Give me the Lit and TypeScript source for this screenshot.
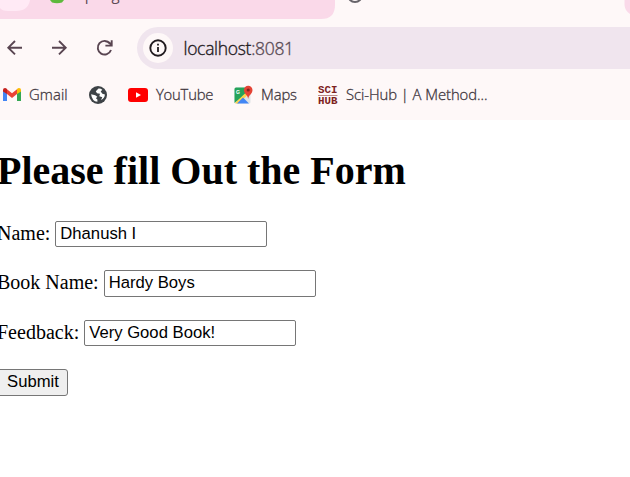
import { LitElement, html, css } from "lit";
import { customElement } from "lit/decorators.js";

const chromeFont = css`"Open Sans", "Noto Sans", sans-serif`;

@customElement("browser-chrome")
class BrowserChrome extends LitElement {
  static styles = css`
    :host { display: block; height: 120px; background: #fef8f8; overflow: hidden; font-family: ${chromeFont}; }
    svg { display: block; flex: none; }
    .strip { height: 19px; overflow: hidden; }
    .toolbar { height: 60px; display: flex; align-items: center; }
    .nav { width: 137px; height: 42px; margin-top: -2px; }
    .address { flex: 1; height: 42px; background: #f0e5ee; border-radius: 21px 0 0 21px; display: flex; align-items: center; padding-left: 6px; margin-top: -2px; }
    .info { width: 30px; height: 30px; border-radius: 50%; background: #fef8f8; display: flex; align-items: center; justify-content: center; }
    .url { margin-left: 10.5px; font-size: 17.5px; font-weight: 300; -webkit-text-stroke: 0.35px; line-height: 24px; letter-spacing: -0.3px; color: #1f1a1e; white-space: nowrap; }
    .port { color: #5b4d57; }
    .bookmarks { display: grid; grid-template-columns: 29px 59px 40px 28px 78px 27px 57px 28px auto; height: 32px; align-items: center; color: #40363d; font-size: 14.8px; line-height: 20px; white-space: nowrap; justify-content: start; }
    .bookmarks span { font-weight: 300; -webkit-text-stroke: 0.3px; margin-top: -3px; }
    .gmail { letter-spacing: 0.1px; }
    .tube { letter-spacing: -0.2px; }
    .maps { letter-spacing: -0.1px; }
    .sci { letter-spacing: -0.05px; }
    .title { font-size: 15px; letter-spacing: -0.4px; fill: #5d4b56; font-family: ${chromeFont}; }
    .logo { font: bold 10.8px "Liberation Mono", monospace; fill: #7d2220; }
    .g { font: bold 5px "Liberation Sans", sans-serif; fill: #fff; }
  `;
  render() {
    return html`
      <div class="strip">
        <svg width="630" height="19" viewBox="0 0 630 19">
          <path d="M0 0H335V5Q335 19 321 19H0Z" fill="#fad9e9" />
          <path d="M0 0H30Q28 11 16 11H8Q2 11 0 8Z" fill="#ffeaf5" />
          <path d="M50 0H64L62 2.5Q57 4 52 2.5Z" fill="#5db93c" />
          <text x="77" y="-0.5" class="title">Spring</text>
          <circle cx="355" cy="-5" r="7" fill="none" stroke="#67646a" stroke-width="2" />
          <path d="M630 0H624.5V5Q625 11 630 14Z" fill="#fad9e9" />
        </svg>
      </div>
      <div class="toolbar">
        <svg class="nav" viewBox="0 27 137 42" fill="none" stroke="#594551" stroke-width="1.9">
          <path d="M22 47.7H8.5M15 41L8.3 47.7L15 54.4" />
          <path d="M52 47.7H65.5M59 41L65.7 47.7L59 54.4" />
          <path d="M110 43.6A6.8 6.8 0 1 0 111 50M111.7 40.3V45.6H105.4M111.7 45L108.8 42.2" />
        </svg>
        <div class="address">
          <div class="info">
            <svg width="18" height="18" viewBox="0 0 18 18">
              <circle cx="9" cy="9" r="7.7" fill="none" stroke="#211b1f" stroke-width="1.9" />
              <path d="M8.1 8H9.9V13H8.1ZM8.1 4.8H9.9V6.6H8.1Z" fill="#211b1f" />
            </svg>
          </div>
          <div class="url">localhost<span class="port">:8081</span></div>
        </div>
      </div>
      <div class="bookmarks">
        <svg width="24" height="20" viewBox="0 85 24 20">
          <path d="M3 90V101H7V93Z" fill="#4285f4" />
          <path d="M17 93V101H21V90Z" fill="#34a853" />
          <path d="M7 89.3L12 93.2L17 89.3V94L12 98L7 94Z" fill="#ea4335" />
          <path d="M3 90Q3 88 5 88Q6 88 7 89V94L3 91.5Z" fill="#c5221f" />
          <path d="M21 90Q21 88 19 88Q18 88 17 89V94L21 91.5Z" fill="#fbbc04" />
        </svg>
        <span class="gmail">Gmail</span>
        <svg width="20" height="20" viewBox="0 0 20 20">
          <circle cx="10" cy="10" r="9" fill="#3e4347" />
          <path d="M10.5 3.5L7.8 6.2L9 8.2L12 8.8L11.3 11.2L14.3 12.3L13 15Q16.8 13.2 16.9 9.6L14.4 8.7L12.7 6.5L14.3 4.7Q12.5 3.2 10.5 3.5ZM3.1 9.3L7.2 10.2L9.3 11.8L7.9 13.2L9.4 14.6V16.8Q4 16.4 3.1 9.3Z" fill="#fff" />
        </svg>
        <svg width="20" height="14" viewBox="0 0 20 14">
          <rect width="20" height="14" rx="3" fill="#f00" />
          <path d="M8 4.2L13 7L8 9.8Z" fill="#fff" />
        </svg>
        <span class="tube">YouTube</span>
        <svg width="20" height="20" viewBox="0 0 20 20">
          <rect x="0.5" y="2.5" width="16" height="16" rx="1.5" fill="#dfe3e6" />
          <path d="M0.5 4Q0.5 2.5 2 2.5H12V9L0.5 18Z" fill="#25a35a" />
          <path d="M1 18L12 7.5L14 9.5L5 18.5H2Z" fill="#ffd34d" />
          <path d="M9 12.5L15 18.5H3Z" fill="#4286f5" />
          <text x="2" y="8.5" class="g">G</text>
          <path d="M14.2 0.8A4.3 4.3 0 0 1 18.5 5.1C18.5 9 14.7 10 14.2 14C13.7 10 9.9 9 9.9 5.1A4.3 4.3 0 0 1 14.2 0.8Z" fill="#e44335" />
          <circle cx="14.2" cy="5" r="1.6" fill="#85251d" />
        </svg>
        <span class="maps">Maps</span>
        <svg width="20" height="20" viewBox="0 0 20 20">
          <text x="0" y="8" class="logo" textLength="19.5" lengthAdjust="spacing">SCI</text>
          <path d="M0 10.5H19.5" stroke="#bc8a87" />
          <text x="0" y="18.8" class="logo" textLength="19.5" lengthAdjust="spacing">HUB</text>
        </svg>
        <span class="sci">Sci-Hub | A Method...</span>
      </div>
    `;
  }
}

@customElement("app-root")
class AppRoot extends LitElement {
  static styles = css`
    :host { display: block; width: 630px; height: 477px; background: #fff; overflow: hidden; color: #000; font-family: "Liberation Serif", serif; font-size: 20px; }
    main { margin-left: -3px; }
    h1 { margin: 28px 0 27px; font-size: 40px; line-height: 46px; white-space: nowrap; }
    .row { display: flex; align-items: flex-start; height: 49.3px; }
    label { line-height: 24px; margin-right: 5px; white-space: nowrap; }
    input { box-sizing: border-box; width: 212px; height: 26px; margin: 0; padding: 0 4px; border: 1px solid #767676; border-radius: 2px; background: #fff; color: #000; font: 16.67px "Liberation Sans", sans-serif; outline: none; }
    .tall { height: 27px; padding-bottom: 2px; }
    button { box-sizing: border-box; display: block; width: 71px; height: 27px; margin: 0; padding: 0 0 1px 1px; border: 1px solid #767676; border-radius: 3px; background: #efefef; color: #000; font: 16.67px "Liberation Sans", sans-serif; }
  `;
  render() {
    const fields = [["Name:", "Dhanush I", ""], ["Book Name:", "Hardy Boys", "tall"], ["Feedback:", "Very Good Book!", ""]];
    return html`
      <browser-chrome></browser-chrome>
      <main>
        <h1>Please fill Out the Form</h1>
        ${fields.map(([l, v, c]) => html`<div class="row"><label>${l}</label><input class=${c} aria-label=${l} .value=${v} /></div>`)}
        <button>Submit</button>
      </main>
    `;
  }
}
